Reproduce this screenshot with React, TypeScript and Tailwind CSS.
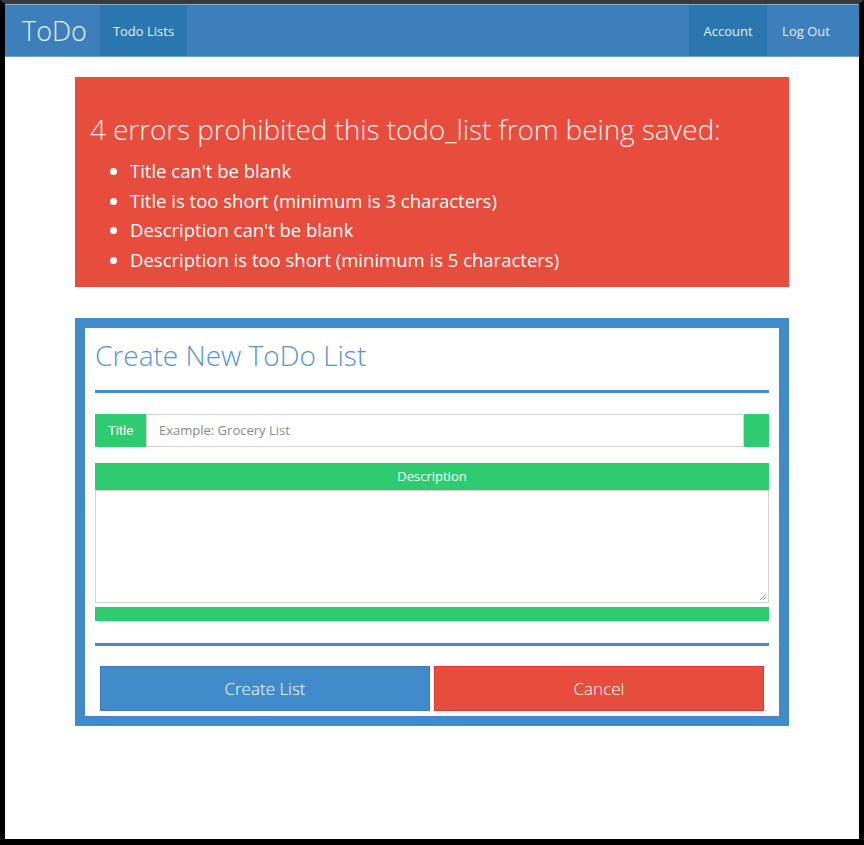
import React from "react";

export default function App() {
  const font = { fontFamily: '"Open Sans", "Noto Sans", sans-serif' };
  return (
    <div
      className="w-[864px] h-[845px] box-border border-t-4 border-t-[#3a3a3a] border-l-[5px] border-r-[5px] border-b-[6px] border-l-black border-r-black border-b-black bg-white overflow-hidden"
      style={font}
    >
      {/* navbar */}
      <nav className="h-[53px] bg-[#3c7fba] border-t border-t-[#7fb0dd] border-b border-b-[#6aa3d6] flex items-stretch text-white">
        <div className="w-[95px] pl-[17px] pt-[1px] flex items-center text-[27px] font-light text-[#e8f1fa]">ToDo</div>
        <div className="w-[87px] pt-[3px] bg-[#2a77b0] flex items-center justify-center text-[13px] text-[#e6eef7]">Todo Lists</div>
        <div className="flex-1" />
        <div className="w-[78px] pt-[3px] bg-[#2a77b0] flex items-center justify-center text-[13px] text-[#e6eef7]">Account</div>
        <div className="w-[78px] pt-[3px] flex items-center justify-center text-[13px] text-[#e6eef7]">Log Out</div>
        <div className="w-[14px]" />
      </nav>

      <div className="w-[714px] mx-auto">
        {/* error box */}
        <div className="mt-[20px] h-[210px] bg-[#e74c3c] text-white pt-[35px] pl-[15px]">
          <h2 className="text-[28px] font-light leading-[34px] text-[#fdf0ee] tracking-[-0.1px]">4 errors prohibited this todo_list from being saved:</h2>
          <ul className="mt-[10px] list-disc pl-[40px] text-[18.5px] leading-[29.7px]">
            <li>Title can't be blank</li>
            <li>Title is too short (minimum is 3 characters)</li>
            <li>Description can't be blank</li>
            <li>Description is too short (minimum is 5 characters)</li>
          </ul>
        </div>

        {/* form box */}
        <div className="mt-[31px] h-[408px] box-border border-[10px] border-[#428bca] bg-white px-[10px]">
          <h1 className="mt-[7px] text-[28px] font-light leading-[40px] text-[#5a93d0]">Create New ToDo List</h1>
          <div className="mt-[15px] h-[3px] bg-[#428bca]" />

          <div className="mt-[21px] h-[33px] flex">
            <div className="w-[51px] bg-[#2ecc71] text-white text-[13px] flex items-center justify-center" style={{ fontFamily: 'Roboto, sans-serif' }}>Title</div>
            <div className="flex-1 border border-[#d4d4d4] flex items-center pl-[12px] text-[13px] text-[#8a8a8a]">Example: Grocery List</div>
            <div className="w-[25px] bg-[#2ecc71]" />
          </div>

          <div className="mt-[16px] h-[27px] bg-[#2ecc71] text-white text-[13px] flex items-center justify-center">Description</div>
          <div className="h-[113px] border border-[#d4d4d4] relative">
            <svg className="absolute right-[1px] bottom-[1px]" width="8" height="8" viewBox="0 0 8 8">
              <path d="M1 7 L7 1 M4 7 L7 4" stroke="#999" strokeWidth="1" />
            </svg>
          </div>
          <div className="mt-[4px] h-[14px] bg-[#2ecc71]" />

          <div className="mt-[22px] h-[3px] bg-[#428bca]" />

          <div className="mt-[20px] px-[5px] flex gap-[4px]">
            <button className="flex-1 h-[45px] bg-[#428bca] border border-[#3a7fbd] text-white text-[17px] font-light">Create List</button>
            <button className="flex-1 h-[45px] bg-[#e74c3c] border border-[#e0392a] text-white text-[17px] font-light">Cancel</button>
          </div>
        </div>
      </div>
    </div>
  );
}
